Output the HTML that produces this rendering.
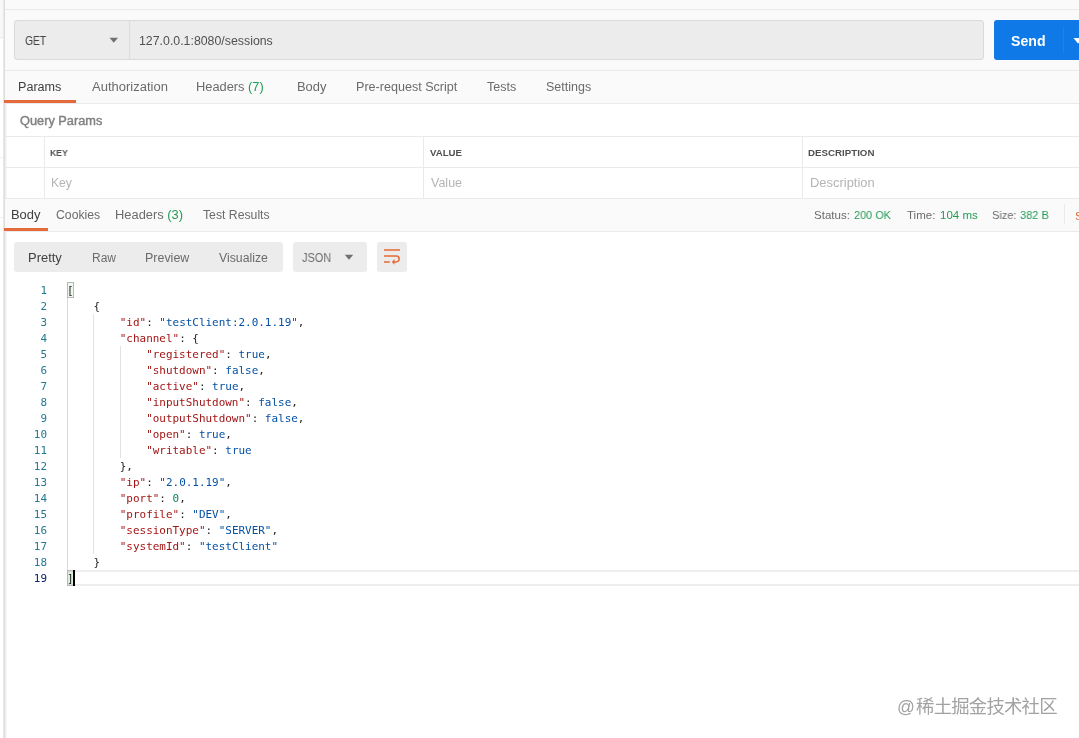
<!DOCTYPE html>
<html lang="en">
<head>
<meta charset="utf-8">
<title>Postman - sessions</title>
<style>
html,body{margin:0;padding:0;}
body{width:1079px;height:738px;overflow:hidden;background:#fff;position:relative;
  font-family:"Liberation Sans","Noto Sans CJK SC",sans-serif;color:#505050;}
.abs{position:absolute;}
.t{position:absolute;transform-origin:0 0;will-change:transform;white-space:nowrap;line-height:16px;font-size:12px;color:#6b6b6b;}
.hl{position:absolute;height:1px;background:#eaeaea;}
.vl{position:absolute;width:1px;background:#eaeaea;}
.g{color:#239b56;}
.code{will-change:transform;position:absolute;left:67px;top:283px;margin:0;font-family:"DejaVu Sans Mono","Liberation Mono",monospace;
  font-size:10.96px;line-height:16px;color:#222;white-space:pre;}
.ln{will-change:transform;position:absolute;left:20px;top:283px;width:27px;margin:0;text-align:right;font-family:"DejaVu Sans Mono","Liberation Mono",monospace;
  font-size:10.96px;line-height:16px;color:#237893;white-space:pre;}
.k{color:#a31515;}
.s{color:#0451a5;}
.b{color:#0451a5;}
.n{color:#09885a;}
</style>
</head>
<body>
<!-- left strip -->
<div class="abs" style="left:0;top:0;width:4px;height:37px;background:#f8f8f8;"></div>
<div class="hl" style="left:0;top:37px;width:4px;"></div>
<div class="hl" style="left:0;top:157px;width:4px;background:#efefef;"></div>
<div class="hl" style="left:0;top:217px;width:4px;background:#efefef;"></div>
<div class="abs" style="left:3px;top:0;width:4px;height:738px;background:linear-gradient(to right,#f2f2f2 0,#dadada 30%,#ededed 60%,#fbfbfb 100%);"></div>

<!-- top request area -->
<div class="abs" style="left:5px;top:0;width:1074px;height:103px;background:#fafafa;"></div>
<div class="hl" style="left:5px;top:9px;width:1074px;"></div>
<div class="hl" style="left:5px;top:70px;width:1074px;"></div>
<div class="hl" style="left:5px;top:103px;width:1074px;"></div>

<!-- URL bar -->
<div class="abs" style="left:14px;top:20px;width:970px;height:40px;background:#ececec;border:1px solid #d9d9d9;box-sizing:border-box;border-radius:3px;"></div>
<div class="vl" style="left:129px;top:21px;height:38px;background:#dcdcdc;"></div>
<svg class="abs" style="left:109px;top:37px;" width="10" height="6" viewBox="0 0 10 6"><path d="M0.5 0.8h8.5L4.75 5.8z" fill="#707070"/></svg>

<!-- Send button -->
<div class="abs" style="left:994px;top:20px;width:90px;height:40px;background:#1079e8;border-radius:3px;"></div>
<div class="vl" style="left:1063px;top:27px;height:26px;background:#1f80e9;"></div>
<svg class="abs" style="left:1073px;top:38px;" width="10" height="6" viewBox="0 0 10 6"><path d="M0.5 0h9L5 5.5z" fill="#fff"/></svg>

<!-- request tabs -->
<div class="abs" style="left:4px;top:100px;width:72px;height:3px;background:#e56a3a;"></div>

<!-- Query params table -->
<div class="hl" style="left:5px;top:136px;width:1074px;"></div>
<div class="hl" style="left:5px;top:167px;width:1074px;"></div>
<div class="hl" style="left:5px;top:198px;width:1074px;"></div>
<div class="vl" style="left:44px;top:136px;height:62px;"></div>
<div class="vl" style="left:423px;top:136px;height:62px;"></div>
<div class="vl" style="left:802px;top:136px;height:62px;"></div>

<!-- response tabs -->
<div class="abs" style="left:5px;top:199px;width:1074px;height:32px;background:#fafafa;"></div>
<div class="hl" style="left:5px;top:231px;width:1074px;"></div>
<div class="abs" style="left:4px;top:228px;width:44px;height:3px;background:#e56a3a;"></div>
<div class="vl" style="left:1064px;top:204px;height:20px;"></div>
<div class="t" style="left:1075px;top:207.5px;font-size:11.5px;color:#dd6633;">S</div>

<!-- view bar -->
<div class="abs" style="left:14px;top:242px;width:269px;height:30px;background:#ececec;border-radius:3px;"></div>
<div class="abs" style="left:293px;top:242px;width:74px;height:30px;background:#ececec;border-radius:3px;"></div>
<svg class="abs" style="left:344px;top:254px;" width="10" height="6" viewBox="0 0 10 6"><path d="M0.8 0.8h8.4L5 5.8z" fill="#707070"/></svg>
<div class="abs" style="left:377px;top:242px;width:30px;height:30px;background:#ececec;border-radius:3px;"></div>
<svg class="abs" style="left:383px;top:248px;" width="18" height="18" viewBox="0 0 18 18" fill="none" stroke="#e56a33" stroke-width="1.5"><path d="M1 1.9h16M1 8h12.2a2.95 2.95 0 0 1 0 5.9H11M1 13.9h5.8"/><path d="M8.8 13.9l2.7-2.8v5.6z" fill="#e56a33" stroke="none"/></svg>

<div class="t" style="left:24.65px;top:32.73px;font-size:12px;transform:scaleX(0.8605);color:#444444;">GET</div>
<div class="t" style="left:138.75px;top:32.73px;font-size:12px;transform:scaleX(1.0283);color:#505050;">127.0.0.1:8080/sessions</div>
<div class="t" style="left:1011.10px;top:33.27px;font-size:14px;transform:scaleX(1.0091);color:#ffffff;font-weight:bold;">Send</div>
<div class="t" style="left:18.25px;top:78.73px;font-size:12px;transform:scaleX(1.0497);color:#404040;">Params</div>
<div class="t" style="left:91.85px;top:78.73px;font-size:12px;transform:scaleX(1.0830);color:#6b6b6b;">Authorization</div>
<div class="t" style="left:196.15px;top:78.73px;font-size:12px;transform:scaleX(1.0688);color:#6b6b6b;">Headers <span class="g">(7)</span></div>
<div class="t" style="left:297.15px;top:78.73px;font-size:12px;transform:scaleX(1.0774);color:#6b6b6b;">Body</div>
<div class="t" style="left:356.25px;top:78.73px;font-size:12px;transform:scaleX(1.0479);color:#6b6b6b;">Pre-request Script</div>
<div class="t" style="left:487.40px;top:78.73px;font-size:12px;transform:scaleX(1.0419);color:#6b6b6b;">Tests</div>
<div class="t" style="left:545.65px;top:78.73px;font-size:12px;transform:scaleX(1.0421);color:#6b6b6b;">Settings</div>
<div class="t" style="left:19.75px;top:112.73px;font-size:12px;transform:scaleX(1.0640);color:#808080;-webkit-text-stroke:0.4px #808080;">Query Params</div>
<div class="t" style="left:50.00px;top:144.66px;font-size:9.5px;transform:scaleX(0.9105);color:#505050;font-weight:bold;">KEY</div>
<div class="t" style="left:429.50px;top:144.66px;font-size:9.5px;transform:scaleX(1.0119);color:#505050;font-weight:bold;">VALUE</div>
<div class="t" style="left:808.15px;top:144.66px;font-size:9.5px;transform:scaleX(1.0233);color:#505050;font-weight:bold;">DESCRIPTION</div>
<div class="t" style="left:51.00px;top:175.03px;font-size:12px;transform:scaleX(1.0127);color:#b4b4b4;">Key</div>
<div class="t" style="left:431.35px;top:175.03px;font-size:12px;transform:scaleX(1.0411);color:#b4b4b4;">Value</div>
<div class="t" style="left:809.65px;top:175.03px;font-size:12px;transform:scaleX(1.0773);color:#b4b4b4;">Description</div>
<div class="t" style="left:11.15px;top:206.73px;font-size:12px;transform:scaleX(1.0774);color:#404040;">Body</div>
<div class="t" style="left:55.65px;top:206.73px;font-size:12px;transform:scaleX(1.0188);color:#6b6b6b;">Cookies</div>
<div class="t" style="left:115.15px;top:206.73px;font-size:12px;transform:scaleX(1.0737);color:#6b6b6b;">Headers <span class="g">(3)</span></div>
<div class="t" style="left:203.40px;top:206.73px;font-size:12px;transform:scaleX(1.0193);color:#6b6b6b;">Test Results</div>
<div class="t" style="left:814.35px;top:207.00px;font-size:11.5px;transform:scaleX(1.0015);color:#6b6b6b;">Status:</div>
<div class="t" style="left:854.15px;top:207.00px;font-size:11.5px;transform:scaleX(0.9481);color:#239b56;">200 OK</div>
<div class="t" style="left:907.40px;top:207.00px;font-size:11.5px;transform:scaleX(0.9984);color:#6b6b6b;">Time:</div>
<div class="t" style="left:939.70px;top:207.00px;font-size:11.5px;transform:scaleX(0.9932);color:#239b56;">104 ms</div>
<div class="t" style="left:991.55px;top:207.00px;font-size:11.5px;transform:scaleX(0.9585);color:#6b6b6b;">Size:</div>
<div class="t" style="left:1020.15px;top:207.00px;font-size:11.5px;transform:scaleX(0.9573);color:#239b56;">382 B</div>
<div class="t" style="left:28.15px;top:249.73px;font-size:12px;transform:scaleX(1.0788);color:#404040;">Pretty</div>
<div class="t" style="left:91.60px;top:249.73px;font-size:12px;transform:scaleX(0.9892);color:#6b6b6b;">Raw</div>
<div class="t" style="left:145.25px;top:249.73px;font-size:12px;transform:scaleX(1.0382);color:#6b6b6b;">Preview</div>
<div class="t" style="left:219.15px;top:249.73px;font-size:12px;transform:scaleX(1.0221);color:#6b6b6b;">Visualize</div>
<div class="t" style="left:301.90px;top:249.73px;font-size:12px;transform:scaleX(0.9130);color:#6b6b6b;">JSON</div>

<!-- code -->
<div class="abs" style="left:67px;top:570px;width:1012px;height:2px;background:#eeeeee;"></div>
<div class="abs" style="left:67px;top:584px;width:1012px;height:2px;background:#eeeeee;"></div>
<div class="vl" style="left:67px;top:298px;height:272px;background:#d8d8d8;"></div>
<div class="vl" style="left:93px;top:314px;height:240px;background:#e2e2e2;"></div>
<div class="vl" style="left:120px;top:346px;height:112px;background:#e2e2e2;"></div>
<pre class="ln"> 1
 2
 3
 4
 5
 6
 7
 8
 9
10
11
12
13
14
15
16
17
18
<span style="color:#0b216f">19</span></pre>
<pre class="code">[
    {
        <span class="k">"id"</span>: <span class="s">"testClient:2.0.1.19"</span>,
        <span class="k">"channel"</span>: {
            <span class="k">"registered"</span>: <span class="b">true</span>,
            <span class="k">"shutdown"</span>: <span class="b">false</span>,
            <span class="k">"active"</span>: <span class="b">true</span>,
            <span class="k">"inputShutdown"</span>: <span class="b">false</span>,
            <span class="k">"outputShutdown"</span>: <span class="b">false</span>,
            <span class="k">"open"</span>: <span class="b">true</span>,
            <span class="k">"writable"</span>: <span class="b">true</span>
        },
        <span class="k">"ip"</span>: <span class="s">"2.0.1.19"</span>,
        <span class="k">"port"</span>: <span class="n">0</span>,
        <span class="k">"profile"</span>: <span class="s">"DEV"</span>,
        <span class="k">"sessionType"</span>: <span class="s">"SERVER"</span>,
        <span class="k">"systemId"</span>: <span class="s">"testClient"</span>
    }
]</pre>
<div class="abs" style="left:67px;top:282px;width:7px;height:16px;border:1px solid #b9b9b9;box-sizing:border-box;background:rgba(0,100,0,0.06);"></div>
<div class="abs" style="left:67px;top:570px;width:7px;height:16px;border:1px solid #b9b9b9;box-sizing:border-box;background:rgba(0,100,0,0.12);"></div>
<div class="abs" style="left:73px;top:570px;width:2px;height:16px;background:#000;"></div>

<!-- watermark -->
<div class="t" style="left:896.5px;top:696px;font-size:18.4px;letter-spacing:-0.8px;line-height:22px;color:#a2a2a2;"><span style="font-size:17.6px;letter-spacing:0;margin-right:1.2px;">@</span>稀土掘金技术社区</div>
</body>
</html>
